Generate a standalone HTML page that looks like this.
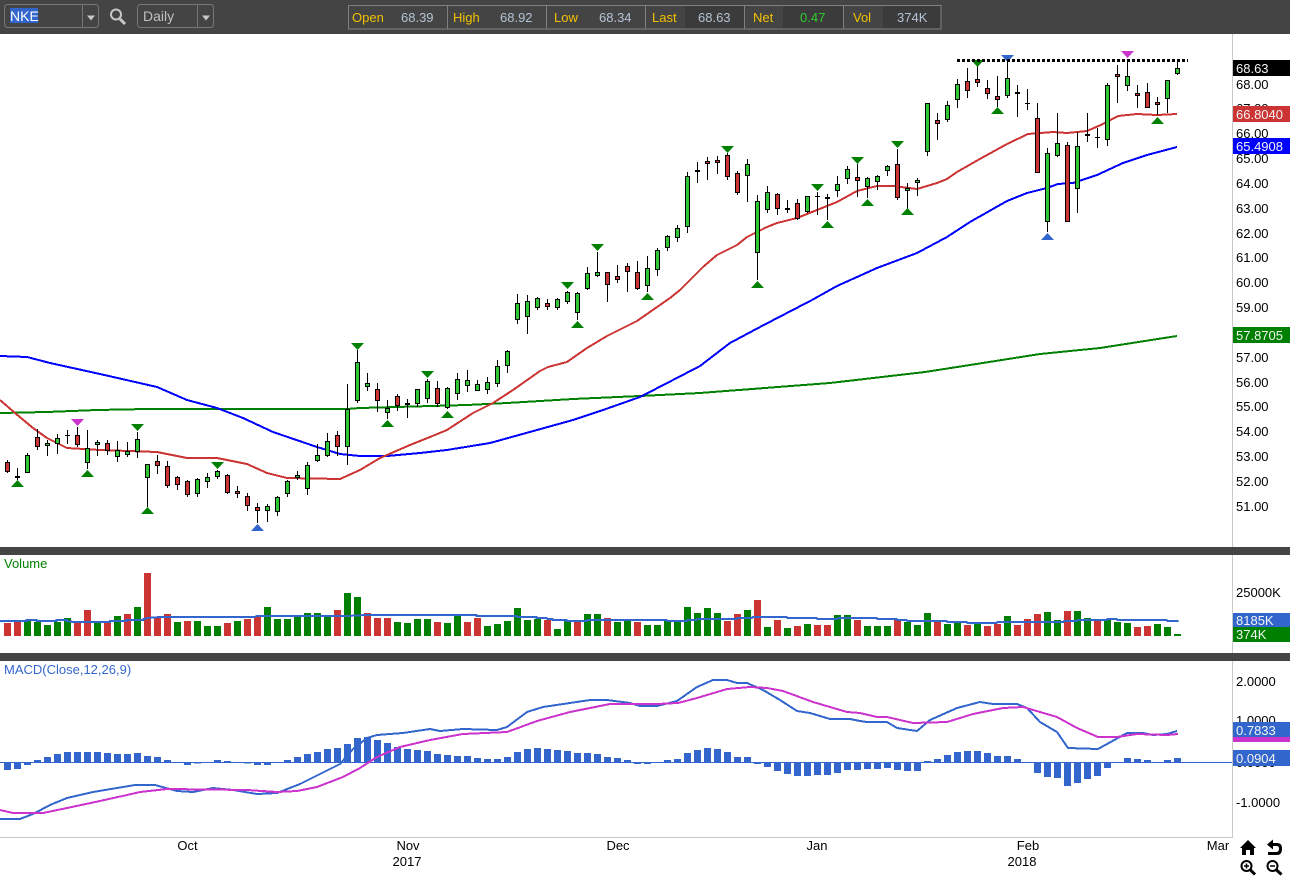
<!DOCTYPE html>
<html><head><meta charset="utf-8"><title>NKE Chart</title>
<style>
html,body{margin:0;padding:0;background:#fff;width:1290px;height:877px;overflow:hidden}
svg{display:block}
text{font-family:"Liberation Sans",Arial,sans-serif;font-size:13px}
.a text,text.a{fill:#000}
.w text{fill:#f4f4f4}
</style></head><body>
<svg width="1290" height="877" viewBox="0 0 1290 877" xmlns="http://www.w3.org/2000/svg">
<rect width="1290" height="877" fill="#fff"/>

<!-- axis lines -->
<path d="M1232.5 34V838M0 837.5H1232" stroke="#c8c8c8" fill="none" shape-rendering="crispEdges"/>

<!-- moving averages -->
<g shape-rendering="crispEdges">
<polyline fill="none" stroke="#008000" stroke-width="2" points="0,413 47,412 97,410 147,409 347,409 360,408 467,405 507,403 573,399 640,396 700,393 830,383 925,372 970,365 1040,354 1100,348 1177,336"/>
<polyline fill="none" stroke="#0000ff" stroke-width="2" points="0,356 27,357 50,363 100,374 157,387 187,400 217,408 243,418 273,432 317,447 340,454 360,456 387,456 420,453 447,450 490,443 537,430 573,420 603,410 640,397 673,380 700,366 730,343 760,327 812,300 837,286 877,268 917,253 947,237 970,222 1007,201 1027,193 1047,188 1058,184 1073,183 1097,175 1123,163 1147,155 1177,147"/>
<polyline fill="none" stroke="#cc3333" stroke-width="2" points="0,400 15,413 33,428 47,438 67,448 100,450 157,452 187,458 217,458 247,464 267,473 287,478 340,479 360,470 380,458 410,445 430,437 447,430 473,413 493,403 513,390 540,371 548,367 567,362 587,348 607,336 637,321 670,298 680,290 703,267 717,255 737,245 747,237 767,227 777,223 797,218 817,210 837,202 857,191 877,186 893,186 917,189 937,183 947,179 957,172 978,160 1007,144 1028,134 1053,132 1067,133 1087,131 1103,124 1118,116 1137,114 1157,115 1177,114"/>
</g>

<!-- wicks -->
<path shape-rendering="crispEdges" stroke="#000" fill="none" d="M7.5 460V473M17.5 468V480M27.5 453V473M37.5 429V450M47.5 440V456M57.5 434V454M67.5 430V444M77.5 427V447M87.5 430V469M97.5 440V456M107.5 440V455M117.5 441V462M127.5 442V457M137.5 432V458M147.5 464V507M157.5 455V474M167.5 461V488M177.5 476V490M187.5 480V497M197.5 478V497M207.5 473V488M217.5 470V479M227.5 474V494M237.5 486V498M247.5 493V511M257.5 503V523M267.5 504V522M277.5 496V516M287.5 480V497M297.5 471V480M307.5 462V495M317.5 444V462M327.5 433V457M337.5 431V456M347.5 384V465M357.5 350V403M367.5 373V391M377.5 383V412M387.5 400V419M397.5 394V411M407.5 399V418M417.5 389V407M427.5 379V403M437.5 381V407M447.5 387V409M457.5 373V400M467.5 370V392M477.5 380V391M487.5 377V394M497.5 360V387M507.5 350V373M517.5 294V324M527.5 295V334M537.5 297V310M547.5 299V310M557.5 298V310M567.5 291V304M577.5 292V320M587.5 267V290M597.5 252V277M607.5 272V302M617.5 265V283M627.5 263V292M637.5 261V290M647.5 256V292M657.5 248V276M667.5 235V251M677.5 225V242M687.5 172V233M697.5 162V183M707.5 157V180M717.5 156V174M727.5 153V180M737.5 171V195M747.5 159V202M757.5 195V280M767.5 186V213M777.5 193V215M787.5 200V213M797.5 199V220M807.5 196V213M817.5 192V215M827.5 194V220M837.5 176V197M847.5 166V184M857.5 164V197M867.5 177V198M877.5 175V190M887.5 165V176M897.5 149V200M907.5 183V209M917.5 178V196M927.5 103V156M937.5 113V140M947.5 101V122M957.5 79V108M967.5 68V98M977.5 60V87M987.5 80V99M997.5 76V107M1007.5 60V98M1017.5 85V117M1027.5 89V110M1037.5 103V173M1047.5 148V232M1057.5 113V157M1067.5 142V222M1077.5 132V213M1087.5 113V142M1097.5 128V148M1107.5 83V146M1117.5 65V103M1127.5 59V91M1137.5 85V108M1147.5 83V108M1157.5 97V115M1167.5 80V113M1177.5 62V75"/>

<!-- green bodies -->
<path shape-rendering="crispEdges" stroke="#000" fill="#2fc733" d="M25.5 455.5h4V472.5h-4zM45.5 443.5h4V445.5h-4zM55.5 438.5h4V443.5h-4zM85.5 448.5h4V462.5h-4zM95.5 442.5h4V444.5h-4zM115.5 450.5h4V456.5h-4zM125.5 451.5h4V454.5h-4zM135.5 439.5h4V451.5h-4zM145.5 464.5h4V477.5h-4zM195.5 479.5h4V493.5h-4zM205.5 477.5h4V481.5h-4zM215.5 471.5h4V476.5h-4zM265.5 506.5h4V510.5h-4zM275.5 497.5h4V511.5h-4zM285.5 481.5h4V493.5h-4zM295.5 475.5h4V477.5h-4zM305.5 465.5h4V488.5h-4zM315.5 455.5h4V460.5h-4zM325.5 441.5h4V455.5h-4zM345.5 409.5h4V446.5h-4zM355.5 362.5h4V400.5h-4zM365.5 383.5h4V386.5h-4zM385.5 408.5h4V412.5h-4zM415.5 389.5h4V403.5h-4zM425.5 381.5h4V398.5h-4zM445.5 388.5h4V407.5h-4zM455.5 379.5h4V393.5h-4zM465.5 380.5h4V385.5h-4zM475.5 384.5h4V390.5h-4zM485.5 382.5h4V389.5h-4zM495.5 366.5h4V383.5h-4zM505.5 351.5h4V365.5h-4zM515.5 303.5h4V319.5h-4zM525.5 301.5h4V316.5h-4zM535.5 298.5h4V307.5h-4zM555.5 299.5h4V307.5h-4zM565.5 292.5h4V301.5h-4zM575.5 293.5h4V312.5h-4zM585.5 273.5h4V288.5h-4zM595.5 272.5h4V275.5h-4zM645.5 268.5h4V285.5h-4zM655.5 250.5h4V269.5h-4zM665.5 236.5h4V247.5h-4zM675.5 228.5h4V237.5h-4zM685.5 176.5h4V226.5h-4zM695.5 170.5h4V171.5h-4zM745.5 164.5h4V175.5h-4zM755.5 201.5h4V252.5h-4zM765.5 192.5h4V209.5h-4zM805.5 196.5h4V211.5h-4zM835.5 184.5h4V190.5h-4zM845.5 169.5h4V178.5h-4zM865.5 178.5h4V186.5h-4zM875.5 176.5h4V181.5h-4zM885.5 166.5h4V170.5h-4zM905.5 188.5h4V190.5h-4zM915.5 180.5h4V182.5h-4zM925.5 103.5h4V151.5h-4zM945.5 105.5h4V119.5h-4zM955.5 84.5h4V99.5h-4zM1005.5 78.5h4V95.5h-4zM1045.5 153.5h4V221.5h-4zM1055.5 143.5h4V155.5h-4zM1075.5 146.5h4V188.5h-4zM1105.5 85.5h4V139.5h-4zM1125.5 76.5h4V85.5h-4zM1165.5 80.5h4V98.5h-4zM1175.5 68.5h4V73.5h-4z"/>

<!-- red bodies -->
<path shape-rendering="crispEdges" stroke="#000" fill="#cc3333" d="M5.5 462.5h4V471.5h-4zM35.5 437.5h4V446.5h-4zM75.5 435.5h4V444.5h-4zM105.5 443.5h4V450.5h-4zM155.5 461.5h4V465.5h-4zM165.5 466.5h4V485.5h-4zM175.5 477.5h4V484.5h-4zM185.5 481.5h4V494.5h-4zM225.5 475.5h4V492.5h-4zM235.5 491.5h4V493.5h-4zM245.5 496.5h4V505.5h-4zM255.5 507.5h4V510.5h-4zM335.5 435.5h4V446.5h-4zM375.5 389.5h4V400.5h-4zM395.5 396.5h4V405.5h-4zM435.5 388.5h4V403.5h-4zM545.5 303.5h4V306.5h-4zM605.5 272.5h4V284.5h-4zM615.5 276.5h4V279.5h-4zM625.5 266.5h4V271.5h-4zM635.5 272.5h4V288.5h-4zM705.5 161.5h4V163.5h-4zM715.5 160.5h4V162.5h-4zM725.5 155.5h4V176.5h-4zM735.5 173.5h4V192.5h-4zM775.5 194.5h4V208.5h-4zM795.5 203.5h4V218.5h-4zM855.5 177.5h4V180.5h-4zM895.5 164.5h4V197.5h-4zM935.5 120.5h4V123.5h-4zM965.5 81.5h4V90.5h-4zM975.5 79.5h4V82.5h-4zM985.5 88.5h4V93.5h-4zM995.5 96.5h4V99.5h-4zM1035.5 118.5h4V172.5h-4zM1065.5 145.5h4V221.5h-4zM1115.5 74.5h4V76.5h-4zM1135.5 93.5h4V95.5h-4zM1145.5 92.5h4V107.5h-4zM1155.5 102.5h4V104.5h-4z"/>

<!-- doji -->
<path shape-rendering="crispEdges" fill="#000" d="M15 476h5v2h-5zM65 435h5v1h-5zM405 403h5v2h-5zM785 208h5v2h-5zM815 196h5v1h-5zM825 197h5v2h-5zM1015 92h5v2h-5zM1025 103h5v1h-5zM1085 134h5v2h-5zM1095 137h5v1h-5z"/>

<!-- markers -->
<path fill="#008000" d="M17.5 480l6.5 7h-13zM87.5 470l6.5 7h-13zM147.5 507l6.5 7h-13zM387.5 420l6.5 7h-13zM447.5 411l6.5 7h-13zM577.5 321l6.5 7h-13zM647.5 293l6.5 7h-13zM757.5 281l6.5 7h-13zM827.5 221l6.5 7h-13zM867.5 199l6.5 7h-13zM907.5 208l6.5 7h-13zM997.5 107l6.5 7h-13zM1157.5 117l6.5 7h-13zM131 424h13l-6.5 7zM211 462h13l-6.5 7zM351 343h13l-6.5 7zM421 371h13l-6.5 7zM561 282h13l-6.5 7zM591 244h13l-6.5 7zM721 146h13l-6.5 7zM811 184h13l-6.5 7zM851 157h13l-6.5 7zM891 141h13l-6.5 7zM971 60h13l-6.5 7z"/>
<path fill="#3366cc" d="M257.5 524l6.5 7h-13zM1047.5 233l6.5 7h-13zM1001 55h13l-6.5 7z"/>
<path fill="#cc33cc" d="M71 419h13l-6.5 7zM1121 51h13l-6.5 7z"/>

<!-- resistance dotted -->
<path d="M957 60.5H1188" stroke="#000" stroke-width="3" stroke-dasharray="3 2" fill="none" shape-rendering="crispEdges"/>

<!-- price axis labels -->
<g class="a">
<text x="1236" y="89">68.00</text>
<text x="1236" y="113">67.00</text>
<text x="1236" y="138">66.00</text>
<text x="1236" y="163">65.00</text>
<text x="1236" y="188">64.00</text>
<text x="1236" y="213">63.00</text>
<text x="1236" y="238">62.00</text>
<text x="1236" y="262">61.00</text>
<text x="1236" y="287">60.00</text>
<text x="1236" y="312">59.00</text>
<text x="1236" y="337">58.00</text>
<text x="1236" y="362">57.00</text>
<text x="1236" y="387">56.00</text>
<text x="1236" y="411">55.00</text>
<text x="1236" y="436">54.00</text>
<text x="1236" y="461">53.00</text>
<text x="1236" y="486">52.00</text>
<text x="1236" y="511">51.00</text>
</g>
<g shape-rendering="crispEdges">
<rect x="1233" y="60" width="57" height="16" fill="#000"/>
<rect x="1233" y="106" width="57" height="16" fill="#cc3333"/>
<rect x="1233" y="138" width="57" height="16" fill="#0000ff"/>
<rect x="1233" y="327" width="57" height="16" fill="#008000"/>
</g>
<g class="w">
<text x="1236" y="73">68.63</text>
<text x="1236" y="119">66.8040</text>
<text x="1236" y="151">65.4908</text>
<text x="1236" y="340">57.8705</text>
</g>

<!-- volume panel -->
<text x="4" y="568" fill="#008000">Volume</text>
<g transform="translate(0 545) scale(1 .33333)" fill="none" stroke-width="7" shape-rendering="crispEdges">
<path stroke="#008000" d="M27.5 228V273M37.5 231V273M47.5 240V273M57.5 231V273M67.5 219V273M97.5 231V273M117.5 213V273M137.5 186V273M177.5 231V273M197.5 228V273M207.5 243V273M217.5 243V273M237.5 228V273M267.5 186V273M277.5 222V273M287.5 222V273M297.5 213V273M307.5 204V273M317.5 204V273M327.5 210V273M347.5 144V273M357.5 156V273M397.5 231V273M407.5 234V273M417.5 222V273M427.5 222V273M447.5 234V273M457.5 213V273M487.5 243V273M497.5 237V273M507.5 228V273M517.5 189V273M527.5 225V273M537.5 222V273M557.5 252V273M567.5 225V273M587.5 207V273M597.5 207V273M617.5 231V273M627.5 225V273M647.5 240V273M657.5 240V273M667.5 225V273M677.5 231V273M687.5 186V273M697.5 204V273M707.5 189V273M717.5 204V273M747.5 195V273M767.5 246V273M787.5 249V273M807.5 237V273M837.5 210V273M847.5 210V273M867.5 243V273M877.5 243V273M887.5 243V273M907.5 231V273M917.5 240V273M927.5 204V273M947.5 237V273M957.5 231V273M977.5 237V273M1007.5 213V273M1047.5 201V273M1057.5 225V273M1077.5 198V273M1087.5 219V273M1107.5 225V273M1117.5 231V273M1127.5 234V273M1157.5 237V273M1167.5 246V273M1177.5 267V273"/>
<path stroke="#cc3333" d="M7.5 234V273M17.5 231V273M77.5 234V273M87.5 195V273M107.5 231V273M127.5 207V273M147.5 84V273M157.5 216V273M167.5 207V273M187.5 228V273M227.5 234V273M247.5 222V273M257.5 216V273M337.5 195V273M367.5 204V273M377.5 219V273M387.5 219V273M437.5 231V273M467.5 231V273M477.5 219V273M547.5 225V273M577.5 228V273M607.5 219V273M637.5 231V273M727.5 228V273M737.5 207V273M757.5 165V273M777.5 225V273M797.5 243V273M817.5 240V273M827.5 240V273M857.5 225V273M897.5 225V273M937.5 231V273M967.5 240V273M987.5 243V273M997.5 237V273M1017.5 240V273M1027.5 222V273M1037.5 207V273M1067.5 198V273M1097.5 225V273M1137.5 246V273M1147.5 243V273"/>
</g>
<g fill="none" stroke="#3366cc" stroke-width="6" shape-rendering="crispEdges">
<polyline transform="translate(0 545) scale(.33333)" points="0,228 80,228 80,225 110,225 110,228 170,228 170,225 200,225 200,228 220,231 330,231 330,228 380,228 380,225 430,225 430,222 445,219 480,216 765,216 770,213 1000,213 1040,213 1100,210 1290,210"/>
<polyline transform="translate(430 545) scale(.33333)" points="0,210 140,210 140,213 260,213 262,216 320,216 320,219 350,219 352,222 368,222 368,225 410,225 410,228 470,228 472,225 710,225 712,228 770,228 772,225 800,225 802,222 920,222 922,219 965,219 968,216 1070,216 1072,219 1160,219 1162,222 1222,222 1225,219 1290,219"/>
<polyline transform="translate(860 545) scale(.33333)" points="0,219 50,219 52,222 110,222 112,225 140,225 142,228 260,228 262,231 320,231 322,234 410,234 412,231 610,231 612,228 650,228 652,225 740,225 742,222 770,222 772,225 920,225 922,228 955,228"/>
</g>
<text class="a" x="1236" y="597">25000K</text>
<g shape-rendering="crispEdges">
<rect x="1233" y="613" width="57" height="14" fill="#3366cc"/>
<rect x="1233" y="627" width="57" height="15" fill="#008000"/>
</g>
<g class="w">
<text x="1236" y="625">8185K</text>
<text x="1236" y="639">374K</text>
</g>

<!-- MACD panel -->
<text x="4" y="674" fill="#3366cc">MACD(Close,12,26,9)</text>
<path d="M0 762.5H1232" stroke="#3366cc" fill="none" shape-rendering="crispEdges"/>
<g transform="translate(0 660) scale(1 .33333)" fill="none" stroke-width="7" stroke="#3366cc" shape-rendering="crispEdges">
<path d="M7.5 307V330M17.5 307V327M27.5 307V315M37.5 307V300M47.5 307V291M57.5 307V282M67.5 307V276M77.5 307V276M87.5 307V276M97.5 307V276M107.5 307V279M117.5 307V282M127.5 307V282M137.5 307V279M147.5 307V288M157.5 307V291M167.5 307V300M187.5 307V315M197.5 307V311M217.5 307V300M227.5 307V303M247.5 307V311M257.5 307V315M267.5 307V315M287.5 307V300M297.5 307V291M307.5 307V282M317.5 307V276M327.5 307V267M337.5 307V264M347.5 307V252M357.5 307V234M367.5 307V231M377.5 307V240M387.5 307V249M397.5 307V261M407.5 307V267M417.5 307V270M427.5 307V273M437.5 307V282M447.5 307V285M457.5 307V288M467.5 307V288M477.5 307V294M487.5 307V297M497.5 307V297M507.5 307V291M517.5 307V276M527.5 307V267M537.5 307V264M547.5 307V267M557.5 307V270M567.5 307V273M577.5 307V279M587.5 307V279M597.5 307V282M607.5 307V291M617.5 307V294M627.5 307V300M637.5 307V312M647.5 307V312M667.5 307V300M677.5 307V297M687.5 307V279M697.5 307V270M707.5 307V264M717.5 307V267M727.5 307V276M737.5 307V291M747.5 307V291M757.5 307V312M767.5 307V321M777.5 307V333M787.5 307V342M797.5 307V348M807.5 307V348M817.5 307V345M827.5 307V345M837.5 307V339M847.5 307V330M857.5 307V330M867.5 307V327M877.5 307V327M887.5 307V324M897.5 307V330M907.5 307V333M917.5 307V333M927.5 307V303M937.5 307V297M947.5 307V285M957.5 307V276M967.5 307V273M977.5 307V273M987.5 307V279M997.5 307V288M1007.5 307V288M1017.5 307V297M1037.5 307V339M1047.5 307V351M1057.5 307V354M1067.5 307V378M1077.5 307V369M1087.5 307V357M1097.5 307V348M1107.5 307V324M1127.5 307V294M1137.5 307V297M1147.5 307V300M1167.5 307V300M1177.5 307V294"/>
</g>
<g shape-rendering="crispEdges">
<polyline fill="none" stroke="#3366cc" stroke-width="2" points="0,819 20,819 33,814 50,805 67,798 93,792 117,788 135,785 155,785 177,791 193,792 213,788 233,790 257,794 277,793 300,784 320,774 340,764 353,749 367,738 377,735 403,733 430,729 440,731 463,729 497,730 507,727 527,712 543,707 570,703 590,700 607,700 630,703 640,706 657,706 677,701 697,687 713,680 727,680 737,683 747,683 763,690 780,700 797,711 810,713 830,719 850,719 860,721 867,722 887,722 897,728 917,731 930,720 957,708 980,702 993,704 1017,704 1027,708 1040,722 1057,732 1068,748 1098,749 1127,733 1143,733 1153,735 1167,734 1177,731"/>
<polyline fill="none" stroke="#cc33cc" stroke-width="2" points="0,810 13,813 43,813 67,808 100,801 127,795 140,792 167,789 247,790 277,792 297,791 317,787 343,777 360,768 377,757 400,747 430,740 463,734 507,732 537,721 570,712 610,704 630,704 657,704 678,703 697,698 727,689 750,687 767,688 783,691 813,702 847,712 860,713 877,717 887,717 913,723 947,722 973,714 1003,708 1023,707 1057,717 1077,728 1098,737 1117,737 1137,734 1167,735 1178,734"/>
</g>

<g class="a">
<text x="1236" y="686">2.0000</text>
<text x="1236" y="725">1.0000</text>
<text x="1236" y="767">0.0000</text>
<text x="1236" y="807">-1.0000</text>
</g>
<g shape-rendering="crispEdges">
<rect x="1233" y="722" width="57" height="15" fill="#3366cc"/>
<rect x="1233" y="737" width="57" height="5" fill="#cc33cc"/>
<rect x="1233" y="750" width="57" height="16" fill="#3366cc"/>
</g>
<g class="w">
<text x="1236" y="735">0.7833</text>
<text x="1236" y="763">0.0904</text>
</g>

<!-- x axis labels -->
<g class="a" text-anchor="middle">
<text x="187.500" y="850">Oct</text>
<text x="408" y="850">Nov</text>
<text x="407" y="866">2017</text>
<text x="618" y="850">Dec</text>
<text x="817" y="850">Jan</text>
<text x="1028" y="850">Feb</text>
<text x="1022" y="866">2018</text>
<text x="1218" y="850">Mar</text>
</g>

<!-- bottom-right icons -->
<path fill="#000" d="M1248 840L1256 848H1254V855H1250V850H1246V855H1242V848H1240Z"/>
<path fill="#000" d="M1267 844.500L1273 839.500V843H1277Q1282 843 1282 848.500Q1282 855 1277 855H1268V852H1276.500Q1279 852 1279 848.500Q1279 846 1276.500 846H1273V849.500Z"/>
<g fill="none" stroke="#000" stroke-width="2">
<circle cx="1246.500" cy="866" r="5"/>
<path d="M1250.500 870L1255 874.500" stroke-width="3"/>
<path d="M1244 866H1249M1246.500 863.500V868.500" stroke-width="1.500"/>
<circle cx="1272.500" cy="866" r="5"/>
<path d="M1276.500 870L1281.500 874.500" stroke-width="3"/>
<path d="M1270 866H1275" stroke-width="1.500"/>
</g>

<!-- separators -->
<g fill="#444" shape-rendering="crispEdges">
<rect x="0" y="547" width="1290" height="8"/>
<rect x="0" y="653" width="1290" height="8"/>
</g>

<!-- toolbar -->
<rect x="0" y="0" width="1290" height="34" fill="#444" shape-rendering="crispEdges"/>
<rect x="4.500" y="4.500" width="94" height="23" rx="3" fill="none" stroke="#777"/>
<path d="M82.500 4.500V27.500" stroke="#777" fill="none"/>
<rect x="10" y="8" width="28" height="15" fill="#3366cc"/>
<text x="10" y="21" fill="#fff" style="font-size:14px">NKE</text>
<path d="M87 15.500H95L91 20.500Z" fill="#c8c8c8"/>
<circle cx="116" cy="14.500" r="5" fill="none" stroke="#c8c8c8" stroke-width="2"/>
<path d="M120 19L125 24" stroke="#c8c8c8" stroke-width="3" fill="none"/>
<rect x="137.500" y="4.500" width="76" height="23" rx="3" fill="none" stroke="#777"/>
<path d="M197.500 4.500V27.500" stroke="#777" fill="none"/>
<text x="143" y="21" fill="#c0c0c0" style="font-size:14px">Daily</text>
<path d="M202 15.500H210L206 20.500Z" fill="#c8c8c8"/>

<!-- quote bar -->
<g shape-rendering="crispEdges">
<rect x="685" y="6" width="59" height="23" fill="#3b3b3b"/>
<rect x="783" y="6" width="60" height="23" fill="#3b3b3b"/>
<rect x="883" y="6" width="58" height="23" fill="#3b3b3b"/>
<rect x="348.500" y="5.500" width="592.500" height="23.500" fill="none" stroke="#808080"/>
<path d="M447.500 6V29M546.500 6V29M645.500 6V29M744.500 6V29M843.500 6V29" stroke="#808080" fill="none"/>
</g>
<g fill="#f2c200">
<text x="352" y="22">Open</text>
<text x="453" y="22">High</text>
<text x="554" y="22">Low</text>
<text x="652" y="22">Last</text>
<text x="753" y="22">Net</text>
<text x="853" y="22">Vol</text>
</g>
<g fill="#b4c2d4">
<text x="401" y="22">68.39</text>
<text x="500" y="22">68.92</text>
<text x="599" y="22">68.34</text>
<text x="698" y="22">68.63</text>
<text x="897" y="22">374K</text>
</g>
<text x="800" y="22" fill="#2ecc2e">0.47</text>
</svg>
</body></html>
